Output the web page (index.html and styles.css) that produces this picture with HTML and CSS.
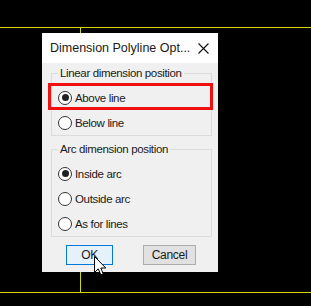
FILE: index.html
```html
<!DOCTYPE html>
<html lang="en">
<head>
    <meta charset="UTF-8">
    <title>Dimension Polyline Options</title>
    <link rel="stylesheet" href="styles.css">
</head>
<body>
    <div class="canvas">
        <!-- drawing lines behind the dialog -->
        <div class="hline line-top"></div>
        <div class="hline line-bottom"></div>
        <div class="vline"></div>

        <div class="dialog">
            <div class="titlebar">
                <span class="title">Dimension Polyline Opt...</span>
                <svg class="close" width="11" height="11" viewBox="0 0 11 11">
                    <path d="M0.5 0.5 L10.5 10.5 M10.5 0.5 L0.5 10.5" stroke="#111" stroke-width="1.1" fill="none"/>
                </svg>
            </div>
            <div class="content">
                <fieldset class="group">
                    <legend>Linear dimension position</legend>
                    <label class="radio"><span class="dot checked"></span>Above line</label>
                    <label class="radio"><span class="dot"></span>Below line</label>
                </fieldset>
                <fieldset class="group group-arc">
                    <legend>Arc dimension position</legend>
                    <label class="radio"><span class="dot checked"></span>Inside arc</label>
                    <label class="radio"><span class="dot"></span>Outside arc</label>
                    <label class="radio"><span class="dot"></span>As for lines</label>
                </fieldset>
                <div class="buttons">
                    <button class="btn btn-ok">OK</button>
                    <button class="btn btn-cancel">Cancel</button>
                </div>
            </div>
            <!-- highlight drawn over the first option -->
            <div class="highlight"></div>
        </div>

        <svg class="cursor" width="13" height="20" viewBox="0 0 13 20">
            <path d="M0.5 0.5 L0.5 16.5 L4.3 12.8 L6.8 18.8 L9.2 17.8 L6.8 12 L11.8 12 Z" fill="#fff" stroke="#000" stroke-width="1"/>
        </svg>
    </div>
</body>
</html>
```

FILE: styles.css
```css
body {
    margin: 0;
    background-color: #000;
    font-family: "Liberation Sans", Arial, sans-serif;
}

.canvas {
    position: relative;
    width: 311px;
    height: 306px;
    overflow: hidden;
}

.hline {
    position: absolute;
    left: 0;
    width: 311px;
    height: 1px;
    background-color: #d6d600;
}

.line-top {
    top: 27px;
}

.line-bottom {
    top: 292px;
}

.vline {
    position: absolute;
    left: 80px;
    top: 27px;
    width: 1px;
    height: 266px;
    background-color: #d6d600;
}

.dialog {
    position: absolute;
    left: 42px;
    top: 33px;
    width: 176px;
    height: 239px;
    background-color: #f0f0f0;
    color: #1a1a1a;
    font-size: 11.5px;
    letter-spacing: -0.35px;
}

.titlebar {
    height: 30px;
    background-color: #fff;
    display: flex;
    align-items: center;
    justify-content: space-between;
    padding: 0 9px 0 8px;
}

.title {
    font-size: 12.5px;
    letter-spacing: 0;
}

.content {
    padding: 2px 6px 0 9px;
}

.group {
    margin: 0;
    padding: 4px 0 0 6px;
    border: 1px solid #dcdcdc;
    display: flex;
    flex-direction: column;
}

.group legend {
    padding: 0 2px;
    line-height: 16px;
}

.group-arc {
    margin-top: 5px;
}

.radio {
    height: 25px;
    display: flex;
    align-items: center;
}

.dot {
    width: 12px;
    height: 12px;
    border: 1px solid #333;
    border-radius: 50%;
    background-color: #fff;
    margin-right: 3px;
    display: flex;
    align-items: center;
    justify-content: center;
}

.dot.checked::after {
    content: "";
    width: 7px;
    height: 7px;
    border-radius: 50%;
    background-color: #222;
}

.buttons {
    display: flex;
    justify-content: space-between;
    padding: 0 16px 0 15px;
    margin-top: 8px;
}

.btn {
    height: 20px;
    font-family: inherit;
    font-size: 12px;
    letter-spacing: -0.3px;
    color: #1a1a1a;
    padding: 0;
}

.btn-ok {
    width: 47px;
    background-color: #e5f1fb;
    border: 1px solid #0078d7;
}

.btn-cancel {
    width: 53px;
    background-color: #e1e1e1;
    border: 1px solid #adadad;
}

.highlight {
    position: absolute;
    left: 6px;
    top: 50px;
    width: 165px;
    height: 27px;
    box-sizing: border-box;
    border: 3px solid #f01010;
}

.cursor {
    position: absolute;
    left: 94px;
    top: 256px;
}
```
